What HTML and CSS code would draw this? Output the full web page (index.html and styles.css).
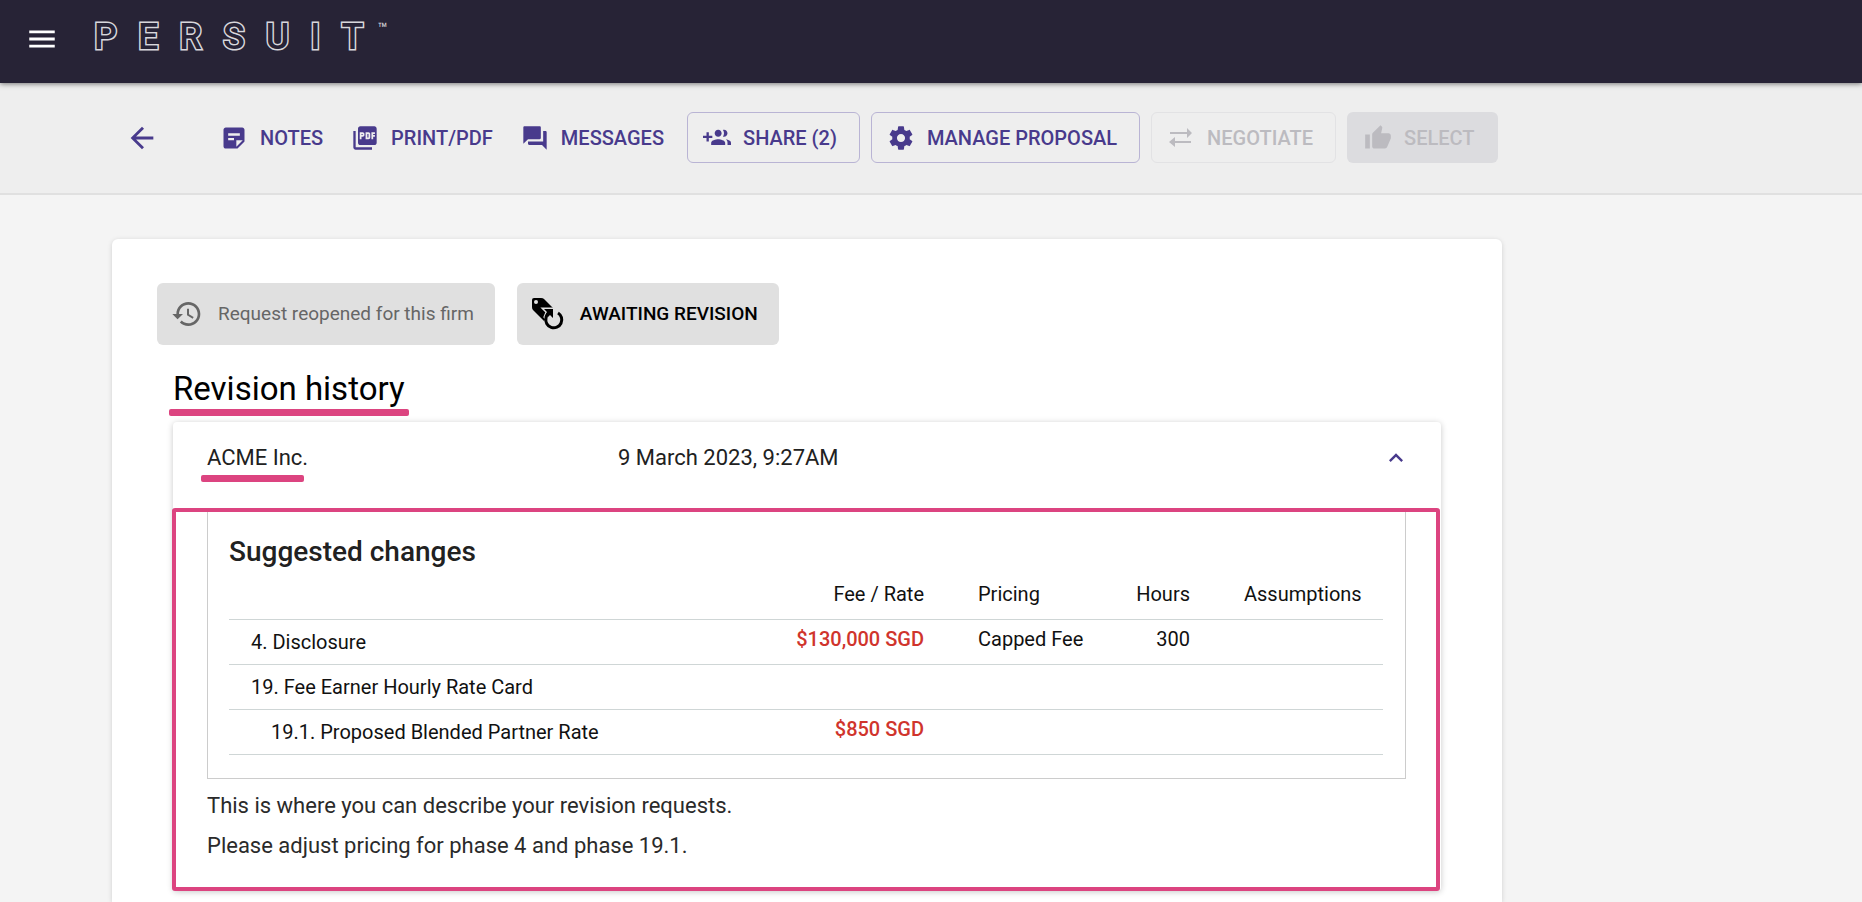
FILE: index.html
```html
<!DOCTYPE html>
<html lang="en">
<head>
<meta charset="utf-8">
<title>Persuit – Proposal</title>
<link rel="stylesheet" href="styles.css">
</head>
<body>
<header class="topbar">
  <button class="menu" aria-label="Menu"><svg viewBox="0 0 24 24" width="34" height="34"><path d="M3 18h18v-2H3v2zm0-5h18v-2H3v2zm0-7v2h18V6H3z"/></svg></button>
  <a class="logo" href="#" aria-label="Persuit"><span>P</span><span>E</span><span>R</span><span>S</span><span>U</span><span>I</span><span>T</span><sup class="tm">™</sup></a>
</header>
<nav class="toolbar">
  <button class="back" aria-label="Back"><svg viewBox="0 0 24 24" width="34" height="34"><path d="M20 11H7.830l5.590-5.590L12 4l-8 8 8 8 1.410-1.410L7.830 13H20v-2z"/></svg></button>
  <div class="links">
    <button class="action"><svg viewBox="0 0 24 24" width="28" height="28"><path d="M19 3H4.990C3.890 3 3 3.900 3 5l.010 14c0 1.100.890 2 1.990 2h10l6-6V5c0-1.100-.9-2-2-2zM7 8h10v2H7V8zm5 6H7v-2h5v2zm2 5.500V14h5.500L14 19.500z"/></svg>NOTES</button>
    <button class="action"><svg viewBox="0 0 24 24" width="28" height="28"><path d="M20 2H8c-1.100 0-2 .9-2 2v12c0 1.100.9 2 2 2h12c1.100 0 2-.9 2-2V4c0-1.100-.9-2-2-2zm-8.500 7.500c0 .830-.670 1.500-1.500 1.500H9v2H7.500V7H10c.830 0 1.500.670 1.500 1.500v1zm5 2c0 .830-.670 1.500-1.500 1.500h-2.500V7H15c.830 0 1.500.670 1.500 1.500v3zm4-3H19v1h1.500V11H19v2h-1.500V7h3v1.500zM9 9.500h1v-1H9v1zM4 6H2v14c0 1.100.9 2 2 2h14v-2H4V6zm10 5.500h1v-3h-1v3z"/></svg>PRINT/PDF</button>
    <button class="action"><svg viewBox="0 0 24 24" width="28" height="28"><path d="M21 6h-2v9H6v2c0 .550.450 1 1 1h11l4 4V7c0-.550-.450-1-1-1zm-4 6V3c0-.550-.450-1-1-1H3c-.550 0-1 .450-1 1v14l4-4h10c.550 0 1-.450 1-1z"/></svg>MESSAGES</button>
  </div>
  <div class="buttons">
    <button class="action outlined share"><svg viewBox="0 0 24 24" width="28" height="28"><path d="M8 10H5V7H3v3H0v2h3v3h2v-3h3v-2zm10 1c1.660 0 2.990-1.340 2.990-3S19.660 5 18 5c-.320 0-.630.050-.910.140.570.810.9 1.790.9 2.860s-.340 2.040-.9 2.860c.280.090.590.140.910.140zm-5 0c1.660 0 2.990-1.340 2.990-3S14.660 5 13 5s-3 1.340-3 3 1.340 3 3 3zm6.620 2.160c.830.730 1.380 1.660 1.380 2.840v2h3v-2c0-1.540-2.370-2.490-4.380-2.840zM13 13c-2 0-6 1-6 3v2h12v-2c0-2-4-3-6-3z"/></svg>SHARE (2)</button>
    <button class="action outlined manage"><svg viewBox="0 0 24 24" width="28" height="28"><path d="M19.430 12.980c.040-.320.070-.640.070-.980s-.030-.660-.070-.980l2.110-1.650c.190-.150.240-.420.120-.640l-2-3.460c-.120-.220-.390-.3-.610-.220l-2.490 1c-.520-.4-1.080-.730-1.690-.980l-.380-2.650C14.460 2.180 14.250 2 14 2h-4c-.250 0-.460.180-.490.420l-.380 2.650c-.610.250-1.170.590-1.690.980l-2.490-1c-.230-.090-.490 0-.610.220l-2 3.460c-.130.220-.070.490.120.640l2.110 1.650c-.040.320-.070.650-.070.980s.030.660.070.980l-2.110 1.650c-.190.150-.240.420-.120.640l2 3.460c.120.220.390.3.610.220l2.490-1c.520.4 1.080.730 1.690.980l.380 2.650c.030.240.240.420.490.420h4c.250 0 .460-.180.490-.420l.380-2.650c.610-.250 1.170-.590 1.690-.980l2.490 1c.230.090.490 0 .610-.220l2-3.460c.120-.220.070-.490-.120-.640l-2.110-1.650zM12 15.500c-1.930 0-3.500-1.570-3.500-3.500s1.570-3.500 3.500-3.500 3.500 1.570 3.500 3.500-1.570 3.500-3.500 3.500z"/></svg>MANAGE PROPOSAL</button>
    <button class="action outlined negotiate" disabled><svg viewBox="0 0 28 28" width="28" height="28"><path d="M3 8h17V4l5 5-5 5v-4H3zM24 17H8v-4l-6 5 6 5v-4h16z"/></svg>NEGOTIATE</button>
    <button class="action filled" disabled><svg viewBox="0 0 24 24" width="28" height="28"><path d="M1 21h4V9H1v12zm22-11c0-1.100-.9-2-2-2h-6.310l.950-4.570.030-.320c0-.410-.170-.790-.440-1.060L14.170 1 7.590 7.590C7.220 7.950 7 8.450 7 9v10c0 1.100.9 2 2 2h9c.830 0 1.540-.5 1.840-1.220l3.020-7.050c.090-.230.140-.470.140-.730v-2z"/></svg>SELECT</button>
  </div>
</nav>
<main class="page">
  <div class="chips">
    <div class="chip reopened"><svg viewBox="0 0 24 24" width="32" height="32"><path d="M13 3c-4.970 0-9 4.030-9 9H1l3.890 3.890.070.140L9 12H6c0-3.870 3.130-7 7-7s7 3.130 7 7-3.130 7-7 7c-1.930 0-3.680-.790-4.940-2.060l-1.420 1.420C8.270 19.990 10.510 21 13 21c4.970 0 9-4.030 9-9s-4.030-9-9-9zm-1 5v5l4.280 2.540.720-1.210-3.500-2.080V8H12z"/></svg>Request reopened for this firm</div>
    <div class="chip awaiting"><svg viewBox="0 0 34 34" width="34" height="34"><path d="M1 3Q1 1 3 1H10Q12 1 13 2L23 12 13 24 2 13Q1 12 1 10Z"/><circle class="hole" cx="5" cy="5" r="2"/><circle class="hole" cx="23" cy="23" r="8"/><path class="halo" d="M13 12H22V21L19 18 16 22 14 20 16 15Z"/><path class="ring" d="M27 16A8 8 0 1 1 15 21Q15 18 18 16"/><path d="M13 12H22V21L19 18 17 20 15 17 16 15Z"/></svg>AWAITING REVISION</div>
  </div>
  <section class="history">
    <h1 class="title"><span class="marked">Revision history</span></h1>
    <div class="panel">
      <div class="summary">
        <span><span class="marked firm">ACME Inc.</span></span>
        <time>9 March 2023, 9:27AM</time>
        <button class="collapse" aria-label="Collapse"><svg viewBox="0 0 24 24" width="28" height="28"><path d="M12 8l-6 6 1.410 1.410L12 10.830l4.590 4.580L18 14z"/></svg></button>
      </div>
      <div class="details">
        <div class="changes">
          <h2 class="subtitle">Suggested changes</h2>
          <table class="rates">
            <colgroup><col><col class="c-fee"><col class="c-pricing"><col class="c-hours"><col class="c-assume"></colgroup>
            <thead><tr><th></th><th class="num">Fee / Rate</th><th>Pricing</th><th class="num">Hours</th><th>Assumptions</th></tr></thead>
            <tbody>
              <tr><td class="name">4. Disclosure</td><td class="num fee">$130,000 SGD</td><td>Capped Fee</td><td class="num">300</td><td></td></tr>
              <tr><td class="name">19. Fee Earner Hourly Rate Card</td><td></td><td></td><td></td><td></td></tr>
              <tr><td class="name nested">19.1. Proposed Blended Partner Rate</td><td class="num fee">$850 SGD</td><td></td><td></td><td></td></tr>
            </tbody>
          </table>
        </div>
        <p>This is where you can describe your revision requests.</p>
        <p>Please adjust pricing for phase 4 and phase 19.1.</p>
      </div>
    </div>
  </section>
</main>
</body>
</html>
```
FILE: styles.css
```css
* { box-sizing: border-box; }
body { margin: 0; background: #f4f4f4; color: #000; font: 20px/24px Roboto, sans-serif; overflow-x: hidden; min-height: 100vh; display: flex; flex-direction: column; }
button { font: inherit; color: inherit; background: none; border: 0; padding: 0; }
svg { display: block; flex: none; fill: currentColor; }

.topbar { display: flex; align-items: flex-start; height: 83px; padding-left: 25px; background: #272336; color: #fff; box-shadow: 0 1px 5px rgba(0, 0, 0, .5); position: relative; z-index: 1; }
.menu { margin-top: 22px; }
.logo { display: flex; margin: 19px 0 0 35px; gap: 21px; font-size: 36px; line-height: 36px; font-weight: 500; color: #272336; text-decoration: none; -webkit-text-stroke: 3px #d8d7dc; paint-order: stroke fill; }
.tm { font-size: 16px; line-height: 16px; font-weight: 400; margin: 2px 0 0 -7px; color: #d8d7dc; -webkit-text-stroke: 0; }

.toolbar { display: flex; align-items: center; height: 112px; padding: 0 0 1px 125px; background: #eee; border-bottom: 2px solid #e0e0e0; color: #483a8c; }
.links { display: flex; gap: 28px; margin-left: 61px; }
.buttons { display: flex; gap: 11px; margin-left: 23px; }
.action { display: flex; align-items: center; gap: 12px; height: 51px; font-size: 20px; font-weight: 500; white-space: nowrap; }
.outlined { padding: 0 22px 0 15px; border: 1px solid #b9b4d4; border-radius: 6px; }
.outlined:disabled { border-color: #e2e2e4; color: #bcbbc0; }
.filled { padding: 0 23px 0 17px; border-radius: 6px; background: #dcdcdf; color: #bcbbc0; }

.page { flex: 1; width: 1390px; max-width: 100%; margin: 44px 0 0 112px; padding: 44px 61px 0 45px; background: #fff; border-radius: 6px 6px 0 0; box-shadow: 0 1px 5px rgba(0, 0, 0, .15); }
.chips { display: flex; gap: 22px; }
.chip { display: flex; align-items: center; gap: 15px; height: 62px; padding: 0 21px 1px 14px; border-radius: 6px; background: #e0e0e0; font-size: 19px; }
.reopened { color: #666; }
.awaiting { font-weight: 500; }
.hole { fill: #e0e0e0; }
.halo { fill: none; stroke: #e0e0e0; stroke-width: 3; }
.ring { fill: none; stroke: currentColor; stroke-width: 3; }

.history { padding-left: 16px; }
.title { margin: 24px 0 13px; font-size: 33px; line-height: 40px; font-weight: 400; }
.marked { position: relative; }
.marked::after { content: ""; position: absolute; left: -4px; right: -4px; bottom: -8px; height: 7px; border-radius: 2px; background: #dc4480; }
.firm::after { left: -6px; right: 4px; bottom: -12px; }
.panel { border-radius: 4px; background: #fff; box-shadow: 0 1px 6px rgba(0, 0, 0, .22); }
.summary { display: grid; grid-template-columns: 411px 1fr auto; align-items: center; padding: 22px 31px 0 34px; height: 86px; align-content: start; font-size: 22px; line-height: 28px; color: #212121; }
.collapse { color: #483a8c; }
.details { border: 4px solid #dc4480; border-radius: 3px; margin: 0 1px 0 -1px; padding: 0 30px 25px 31px; color: #2a2a2a; }
.details p { margin: 8px 0 0; font-size: 22px; line-height: 32px; }
.changes { padding: 24px 22px 23px 21px; border: 1px solid #ccc; border-top: 0; margin-bottom: 11px; }
.subtitle { margin: 0 0 6px; font-size: 28px; line-height: 32px; font-weight: 500; color: #212121; }
.rates { width: 100%; table-layout: fixed; border-collapse: collapse; font-size: 20px; line-height: 24px; color: #111; }
.c-fee { width: 170px; }
.c-pricing { width: 158px; }
.c-hours { width: 108px; }
.c-assume { width: 166px; }
.rates th, .rates td { height: 45px; padding: 0 0 6px 27px; text-align: left; font-weight: 400; border-bottom: 1px solid #cfd6d6; }
.rates th { padding-bottom: 4px; }
.rates .num { padding-left: 0; padding-right: 27px; text-align: right; }
.rates .fee { color: #d0342c; font-weight: 500; }
.rates .name { padding: 0 0 0 22px; }
.rates .nested { padding-left: 42px; }
```
